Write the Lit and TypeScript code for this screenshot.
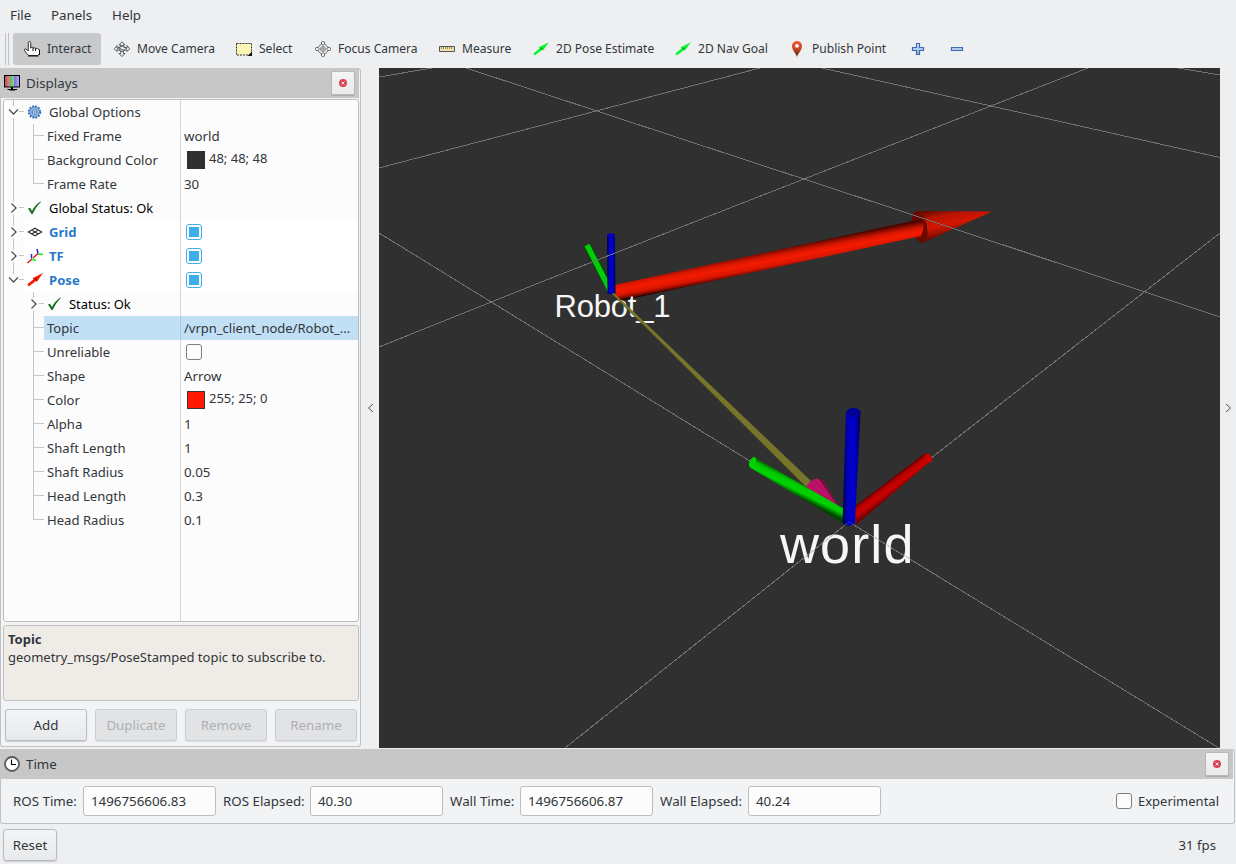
import { LitElement, html, svg, css, nothing } from "lit";
import { customElement, property } from "lit/decorators.js";

const icons = {
  hand: svg`<path d="M5 .5h1l.7.7v6l.6-1h1.400l.6 1 .5-.4h1.200l.6 1 .5-.4h1.200l.7 .8h1l.5 .6v3.700l-1.500 2H4.500L1.500 11 .5 9.500V8.300L2 8l2.300 2V1.200z" fill="#fff" stroke="#333" stroke-width="1"/><path d="M4 15h10.500M15.500 9v5M9 7v3M11.500 7.500v2.500" stroke="#111" fill="none"/>`,
  move: svg`<g fill="#eff0f1" stroke="#55595c" stroke-width="1"><path d="M8 .8l3 3H9.200V6L13 7V4.500l2.700 3.300L13 10.500V8.800L9.300 9.500v3H11l-3 3-3-3h1.700v-3L3 8.800v1.700L.3 7.800 3 4.500V7l3.700-1V3.800H5z"/><ellipse cx="8" cy="7.500" rx="2.500" ry="3"/><path d="M3 8l5-3 5 3M5 7l5 2.500"/></g>`,
  select: svg`<path d="M.5 2.500h15v11.500H.5z" fill="#fcf4b4" stroke="#333" stroke-dasharray="2 1"/><path d="M16 10.500V15h-4.500z" fill="#111"/>`,
  focus: svg`<g fill="none" stroke="#686b6e" stroke-width="1"><circle cx="8" cy="8" r="5"/><circle cx="8" cy="8" r="2.500" stroke="#888"/><path d="M8 3v10M3 8h10" stroke="#888"/><path d="M6.500 3.200V1L8 0l1.500 1v2.200M6.500 12.800V15L8 16l1.500-1v-2.200M3.200 6.500H1L0 8l1 1.500h2.200M12.800 6.500H15L16 8l-1 1.500h-2.200" fill="#eff0f1"/></g>`,
  ruler: svg`<path d="M.5 5.500h15v5H.5z" fill="#f2e1a1" stroke="#555" /><path d="M2.500 6v2M4.500 6v2M6.500 6v2M8.500 6v2M10.500 6v2M12.500 6v2" stroke="#777" stroke-width=".8"/>`,
  greenArrow: svg`<path d="M.4 12.500L6.500 7.500 5.500 6.500 15.800 1.200 10.200 9.300 9 8.900 1.700 14.500z" fill="#08f52a"/><path d="M7 7.300l2.800 2-1-2.800z" fill="#087f18"/>`,
  pin: svg`<defs><linearGradient id="p" x2="0" y2="1"><stop stop-color="#f0583a"/><stop offset=".5" stop-color="#c44526"/><stop offset="1" stop-color="#4a2a10"/></linearGradient></defs><path d="M8 16C7 12 3 9.500 3 5a5 5 0 0 1 10 0c0 4.500-4 7-5 11z" fill="url(#p)"/><circle cx="8" cy="4.800" r="1.900" fill="#fff"/>`,
  plus: svg`<defs><linearGradient id="pl" x2="0" y2="1"><stop stop-color="#dbe6f5"/><stop offset="1" stop-color="#8fb0dc"/></linearGradient></defs><path d="M6.500 2.500h3v4h4v3h-4v4h-3v-4h-4v-3h4z" fill="url(#pl)" stroke="#3a6cb3" stroke-width="1.200"/>`,
  minus: svg`<path d="M2.500 6.500h11v3h-11z" fill="#b3cbea" stroke="#3a6cb3" stroke-width="1.200"/>`,
  monitor: svg`<defs><linearGradient id="mo" x2="1" y2="0"><stop stop-color="#b85454"/><stop offset=".32" stop-color="#d68a8a"/><stop offset=".34" stop-color="#5fae5f"/><stop offset=".65" stop-color="#8fd98f"/><stop offset=".67" stop-color="#7676d8"/><stop offset="1" stop-color="#aaaaf4"/></linearGradient></defs><path d="M0 0h16v12.500H0z" fill="#000"/><path d="M1 1h14v10.500H1z" fill="url(#mo)"/><path d="M7 12h2v2h4v1H3.500v-1H7z" fill="#000"/><path d="M6 15.500h5" stroke="#555"/>`,
  clock: svg`<circle cx="8" cy="8" r="7" fill="#fff" stroke="#5b5b5b" stroke-width="1.800"/><path d="M7.500 3.500v5h4.500" fill="none" stroke="#000" stroke-width="1.100"/>`,
  gear: svg`<circle cx="7.500" cy="8" r="5.800" fill="none" stroke="#3f73b8" stroke-width="1.900" stroke-dasharray="1.900 1.140"/><circle cx="7.500" cy="8" r="4.900" fill="#94b6e3" stroke="#4678bb" stroke-width=".9"/><circle cx="7.500" cy="8" r="2.300" fill="#c5d8f0" stroke="#4678bb" stroke-width=".9"/><circle cx="7.500" cy="8" r=".8" fill="#3f73b8"/>`,
  check: svg`<path d="M1 8.500l2-.8 2 3.300C7 7 10 3.500 13.500 1.500l.5.5C10.500 5 8 9 5.700 14H4.500z" fill="#16701c"/>`,
  grid: svg`<path d="M1.300 8L8 4.200 14.700 8 8 11.800zM4.700 6.100l6.600 3.800M11.300 6.100L4.700 9.900" fill="none" stroke="#333" stroke-width="1.100"/>`,
  tf: svg`<path d="M.5 15L5 11M6 10L11 5.500" stroke="#e01414" stroke-width="1.400" fill="none"/><path d="M4.500 6v4.500M10 1l1 4.500" stroke="#2222e8" stroke-width="1.500"/><path d="M11 6.300h5M5 11.300l4 1.200" stroke="#19ee19" stroke-width="1.600"/>`,
  redArrow: svg`<path d="M.3 12.300L6.500 7.200 5.500 6.300 15.800 1 10 9.700 9 9 1.700 14.500z" fill="#fa1a08"/><path d="M7 6.800l3 2.500-.5-3.500z" fill="#8c1208"/>`,
};

const icon = (name: keyof typeof icons) =>
  html`<svg class="icon" width="16" height="16" viewBox="0 0 16 16">${icons[name]}</svg>`;

const shared = css`
  * { box-sizing: border-box; }
  svg { display: block; flex: none; }
  .title { display: flex; align-items: center; height: 30px; background: #c7c7c7; padding: 0 4px; gap: 6px; flex: none; }
  .title span { flex: 1; }
  .close { width: 24px; height: 24px; border: 1px solid #b7b9bb; border-radius: 2px; background: linear-gradient(#f3f4f5, #e9eaec); display: grid; place-items: center; box-shadow: 0 1px 1px #a9a9a9; }
  .btn { display: grid; place-items: center; height: 32px; border: 1px solid #b9bbbe; border-radius: 3px; background: linear-gradient(#f3f4f6, #e8e9eb); box-shadow: 0 1px 1px #c9cbcd; }
  .btn.off { color: #adb0b3; border-color: #ccced0; background: #e2e3e5; box-shadow: 0 1px 1px #dcddde; }
  .box { width: 16px; height: 16px; border: 1px solid #7b7f83; border-radius: 3px; background: #fcfcfc; flex: none; }
  .box.on { border-color: #3daee9; padding: 2px; }
  .box.on::after { content: ""; display: block; width: 10px; height: 10px; background: #3daee9; }
`;

const closeButton = html`<div class="close"><svg width="8" height="8" viewBox="0 0 8 8"><circle cx="4" cy="4" r="4" fill="#da4453"/><path d="M2.600 2.600l2.800 2.800M5.400 2.600L2.600 5.400" stroke="#fff" stroke-width=".9"/></svg></div>`;

interface Row {
  label: string;
  kind: "top" | "child" | "status";
  icon?: keyof typeof icons;
  open?: boolean;
  inGroup?: boolean;
  last?: boolean;
  value?: string;
  checked?: boolean;
  swatch?: "dark" | "red";
  tone?: "link" | "black";
  selected?: boolean;
}

const rows: Row[] = [
  { label: "Global Options", kind: "top", icon: "gear", open: true },
  { label: "Fixed Frame", kind: "child", value: "world", inGroup: true },
  { label: "Background Color", kind: "child", value: "48; 48; 48", swatch: "dark", inGroup: true },
  { label: "Frame Rate", kind: "child", value: "30", inGroup: true, last: true },
  { label: "Global Status: Ok", kind: "top", icon: "check", tone: "black" },
  { label: "Grid", kind: "top", icon: "grid", tone: "link", checked: true },
  { label: "TF", kind: "top", icon: "tf", tone: "link", checked: true },
  { label: "Pose", kind: "top", icon: "redArrow", tone: "link", checked: true, open: true, last: true },
  { label: "Status: Ok", kind: "status", icon: "check", tone: "black" },
  { label: "Topic", kind: "child", value: "/vrpn_client_node/Robot_...", selected: true },
  { label: "Unreliable", kind: "child", checked: false },
  { label: "Shape", kind: "child", value: "Arrow" },
  { label: "Color", kind: "child", value: "255; 25; 0", swatch: "red" },
  { label: "Alpha", kind: "child", value: "1" },
  { label: "Shaft Length", kind: "child", value: "1" },
  { label: "Shaft Radius", kind: "child", value: "0.05" },
  { label: "Head Length", kind: "child", value: "0.3" },
  { label: "Head Radius", kind: "child", value: "0.1", last: true },
];

@customElement("rviz-tree")
class RvizTree extends LitElement {
  static styles = [shared, css`
    :host { display: block; height: 523px; border: 1px solid #bbbdc0; border-radius: 3px; background: linear-gradient(90deg, transparent 176px, #d5d6d7 176px, #d5d6d7 177px, transparent 177px) #fcfcfc; }
    .row { display: flex; height: 24px; }
    .gutter { width: 20px; }
    .gutter.deep { width: 40px; }
    .rest { flex: 1; display: flex; align-items: center; }
    .rest.white { background: linear-gradient(90deg, transparent 156px, #d5d6d7 156px, #d5d6d7 157px, transparent 157px) #fff; }
    .rest.sel { background: linear-gradient(90deg, transparent 136px, #acc8dc 136px, #acc8dc 137px, transparent 137px) #c1dff5; }
    .rest.sel .value { font-size: 13px; }
    .name { display: flex; align-items: center; width: 156px; gap: 6px; padding-left: 3px; white-space: nowrap; font-size: 13.1px; }
    .deepname { width: 136px; }
    .link { color: #2a79c8; font-weight: 700; }
    .black { color: #000; font-size: 12.950px; }
    .value { padding-left: 4px; display: flex; align-items: center; white-space: nowrap; }
    .box { margin-left: 2px; }
    .swatch { width: 18px; height: 18px; margin: 0 4px 0 3px; background: #303030; }
    .swatch.red { background: #ff1900; border: 1px solid #31363b; }
    .coltext { padding-bottom: 4px; font-size: 13px; line-height: 16px; }
  `];

  gutter(r: Row) {
    const deep = r.kind !== "top";
    const x = deep ? 29.5 : 9.5;
    const lines = r.kind === "child"
      ? `M29.5 0V${r.last ? 12 : 24}M30 11.5H40`
      : `M${x} 0V6${r.last ? "" : `M${x} 18V24`}M${x + 5.5} 11.500H${x + 10.5}`;
    const arrow = r.open ? `M${x - 4.5} 9.500l4.500 4.500 4.500-4.500` : `M${x - 2} 7.500l4.500 4.500-4.500 4.500`;
    return html`<svg class="gutter ${deep ? "deep" : ""}" height="24">
      <path d=${lines} stroke="#c3c5c7" fill="none"/>
      ${r.inGroup ? svg`<path d="M9.500 0V24" stroke="#c3c5c7"/>` : nothing}
      ${r.kind !== "child" ? svg`<path d=${arrow} stroke="#4d5257" stroke-width="1.300" fill="none"/>` : nothing}
    </svg>`;
  }

  render() {
    return rows.map((r) => html`<div class="row">
      ${this.gutter(r)}
      <div class="rest ${r.tone === "link" ? "white" : ""} ${r.selected ? "sel" : ""}">
        <div class="name ${r.kind !== "top" ? "deepname" : ""} ${r.tone ?? ""}">${r.icon ? icon(r.icon) : nothing}<span>${r.label}</span></div>
        <div class="value">
          ${r.checked !== undefined ? html`<div class="box ${r.checked ? "on" : ""}"></div>` : nothing}
          ${r.swatch ? html`<div class="swatch ${r.swatch}"></div>` : nothing}
          ${r.value ? html`<span class=${r.swatch ? "coltext" : ""}>${r.value}</span>` : nothing}
        </div>
      </div>
    </div>`);
  }
}

@customElement("rviz-scene")
class RvizScene extends LitElement {
  static styles = css`
    :host { display: block; width: 841px; height: 680px; background: #303030; overflow: hidden; }
    svg { display: block; }
    text { font-family: "Liberation Sans", sans-serif; fill: #f6f6f6; }
    .grid { stroke: #727272; stroke-width: 1; fill: none; shape-rendering: crispEdges; }
    .small { font-size: 31px; }
    .large { font-size: 54px; }
  `;
  render() {
    return html`<svg width="841" height="680" viewBox="379 68 841 680">
      <defs>
        <linearGradient id="shaft" gradientUnits="userSpaceOnUse" x1="738" y1="256" x2="742" y2="277"><stop stop-color="#4e0500"/><stop offset=".12" stop-color="#8e0d00"/><stop offset=".3" stop-color="#d81600"/><stop offset=".5" stop-color="#f41b00"/><stop offset=".75" stop-color="#d81600"/><stop offset=".9" stop-color="#800b00"/><stop offset="1" stop-color="#200"/></linearGradient>
        <linearGradient id="cone" gradientUnits="userSpaceOnUse" x1="940" y1="209" x2="946" y2="238"><stop stop-color="#6e0a00"/><stop offset=".25" stop-color="#b81300"/><stop offset=".55" stop-color="#d41600"/><stop offset=".8" stop-color="#9c1000"/><stop offset="1" stop-color="#4a0600"/></linearGradient>
        <linearGradient id="green" gradientUnits="userSpaceOnUse" x1="803" y1="482" x2="796" y2="496"><stop stop-color="#006800"/><stop offset=".3" stop-color="#00cb00"/><stop offset=".65" stop-color="#00d400"/><stop offset="1" stop-color="#004600"/></linearGradient>
        <linearGradient id="red" gradientUnits="userSpaceOnUse" x1="886" y1="481" x2="895" y2="493"><stop stop-color="#400"/><stop offset=".3" stop-color="#b00000"/><stop offset=".6" stop-color="#d00000"/><stop offset="1" stop-color="#780000"/></linearGradient>
        <linearGradient id="blue" x2="1" y2="0"><stop stop-color="#000048"/><stop offset=".3" stop-color="#0000bd"/><stop offset=".6" stop-color="#0000d0"/><stop offset=".85" stop-color="#000098"/><stop offset="1" stop-color="#000038"/></linearGradient>
      </defs>
      <path class="grid" d="M379 233L849 522 1219 748M565 748L849 522 1220 233M379 168L760 68M379 77L432 68M822 68L1220 157.500M1178 68L1220 75"/>

      <polygon points="917,211 992,211.500 922,243" fill="url(#cone)"/>
      <ellipse cx="919.500" cy="227" rx="7.500" ry="16" transform="rotate(-12 919.500 227)" fill="#6a0900"/>
      <path d="M614 285L921 219Q926 226 921 236L616 302Z" fill="url(#shaft)"/>
      <path d="M587.500 246L611 290" stroke="#004a00" stroke-width="7.500"/>
      <path d="M587 245L610 290" stroke="#00cc0a" stroke-width="5.500"/>
      <path d="M607 236q4-4.500 8 0l.5 58h-8z" fill="url(#blue)"/>
      <ellipse cx="611" cy="235.500" rx="4" ry="2.300" fill="#0000b0"/>
      <text class="small" x="554.500" y="317" textLength="116">Robot_1</text>
      <path d="M612 293.500L614 293 811 481 806 487Z" fill="#77752b"/>
      <path d="M612 294L806 487" stroke="#4b4a1e" stroke-width=".8"/>
      <path class="grid" d="M379 347L540 282.500 740 204 1088 68M466 68L860 197.500 1020 250.500 1220 317"/>

      <path d="M806 487Q811 479 817 478.500L824 481 841 511Z" fill="#be1268"/>
      <path d="M819 479L824 481 841 511Z" fill="#71103f"/>
      <path d="M810 484L838 508M815 481L839 508" stroke="#96104f" stroke-width=".7"/>
      <path d="M755 457.500L846 510 847 526 750 467.500Q747 461 755 457.500Z" fill="url(#green)"/>
      <ellipse cx="752.500" cy="462" rx="3" ry="5.300" transform="rotate(28 752.500 462)" fill="#00d400"/>
      <path d="M854 507L924 454Q931 452 932 460L856 525Z" fill="url(#red)"/>
      <ellipse cx="928.500" cy="458" rx="3" ry="5" transform="rotate(-38 928.500 458)" fill="#cc0000"/>
      <path d="M846 412L860.500 412 855 523Q849 529 842.500 523Z" fill="url(#blue)"/>
      <ellipse cx="853.500" cy="412.500" rx="7" ry="4.500" fill="#000099"/>
      <text class="large" x="780" y="562.500" textLength="133.500">world</text>
      <path class="grid" d="M849 522L943 579M849 522L775 581" opacity=".35"/>
    </svg>`;
  }
}

@customElement("app-root")
class AppRoot extends LitElement {
  static styles = [shared, css`
    :host { display: flex; flex-direction: column; width: 1236px; height: 864px; background: #eeeff1; color: #31363b; font: 13.333px/18px "Noto Sans", sans-serif; overflow: hidden; }
    .menu { display: grid; grid-template-columns: 41px 61px 60px; padding-left: 10px; height: 30px; align-items: center; }
    .tools { display: grid; height: 38px; padding: 3px 0 3px 5px; grid-template-columns: 8px 90px 122px 79px 124px 94px 142px 114px 121px 39px 39px; font-size: 12.050px; }
    .handle { width: 4px; border: solid #c0c2c4; border-width: 0 1px; }
    .tool { display: flex; align-items: center; gap: 7px; padding-left: 11px; white-space: nowrap; }
    .tool span { padding-bottom: 1px; }
    .tool.on { background: #c8c9cb; border-radius: 3px; margin-right: 2px; }
    .main { display: flex; height: 680px; }
    .dock { width: 361px; height: 679px; background: linear-gradient(#f2f3f5, #f2f3f5) 1px 0 no-repeat; border: 1px solid #bfc1c4; border-radius: 3px; border-left: 0; box-shadow: inset 1px 0 #bfc1c4; }
    .dock .title { width: 359px; margin-top: -1px; }
    rviz-tree { margin: 1px 1px 0 3px; }
    .help { margin: 3px 1px 0 3px; height: 76px; border: 1px solid #bfc1c3; border-radius: 3px; background: #efebe6; padding: 4px; font-size: 13px; }
    .buttons { display: grid; grid-template-columns: repeat(4, 82px); gap: 8px; padding: 8px 0 0 5px; }
    .split { width: 18px; display: grid; place-items: center; }
    .split.right { width: 16px; }
    .time { height: 75px; margin: 1px 1px 0 0; background: #f2f3f5; border: 1px solid #bfc1c4; border-radius: 3px; border-left: 0; box-shadow: inset 1px 0 #bfc1c4; }
    .time .title { width: 1233px; margin-top: -1px; }
    .fields { display: grid; grid-template-columns: 70px 140px 87px 140px 70px 140px 88px 133px 1fr auto; align-items: center; padding: 7px 15px 0 13px; white-space: nowrap; }
    .field { width: 133px; height: 30px; border: 1px solid #bbbdc0; border-radius: 3px; background: #fcfcfc; padding: 5px 7px; }
    .exp { grid-column: 10; display: flex; gap: 6px; align-items: center; font-size: 13px; }
    .status { display: flex; justify-content: space-between; align-items: flex-start; padding: 5px 20px 0 3px; flex: 1; }
    .status span { line-height: 32px; font-size: 13.200px; }
    .status .btn { width: 54px; }
  `];

  @property() fps = "31 fps";

  render() {
    const tools: [keyof typeof icons, string][] = [
      ["hand", "Interact"], ["move", "Move Camera"], ["select", "Select"], ["focus", "Focus Camera"],
      ["ruler", "Measure"], ["greenArrow", "2D Pose Estimate"], ["greenArrow", "2D Nav Goal"],
      ["pin", "Publish Point"], ["plus", ""], ["minus", ""],
    ];
    const times = [["ROS Time:", "1496756606.83"], ["ROS Elapsed:", "40.30"], ["Wall Time:", "1496756606.87"], ["Wall Elapsed:", "40.24"]];
    return html`
      <div class="menu"><span>File</span><span>Panels</span><span>Help</span></div>
      <div class="tools"><div class="handle"></div>
        ${tools.map(([i, t], n) => html`<div class="tool ${n === 0 ? "on" : ""}">${icon(i)}${t ? html`<span>${t}</span>` : nothing}</div>`)}
      </div>
      <div class="main">
        <div class="dock">
          <div class="title">${icon("monitor")}<span>Displays</span>${closeButton}</div>
          <rviz-tree></rviz-tree>
          <div class="help"><b>Topic</b><br>geometry_msgs/PoseStamped topic to subscribe to.</div>
          <div class="buttons"><div class="btn">Add</div><div class="btn off">Duplicate</div><div class="btn off">Remove</div><div class="btn off">Rename</div></div>
        </div>
        <div class="split"><svg width="8" height="10" viewBox="0 0 8 10"><path d="M7 1L2.500 5 7 9" fill="none" stroke="#4d5257"/></svg></div>
        <rviz-scene></rviz-scene>
        <div class="split right"><svg width="8" height="10" viewBox="0 0 8 10"><path d="M2 1L6.500 5 2 9" fill="none" stroke="#4d5257"/></svg></div>
      </div>
      <div class="time">
        <div class="title">${icon("clock")}<span>Time</span>${closeButton}</div>
        <div class="fields">
          ${times.map(([l, v]) => html`<span>${l}</span><div class="field">${v}</div>`)}
          <div class="exp"><div class="box"></div>Experimental</div>
        </div>
      </div>
      <div class="status"><div class="btn">Reset</div><span>${this.fps}</span></div>`;
  }
}
